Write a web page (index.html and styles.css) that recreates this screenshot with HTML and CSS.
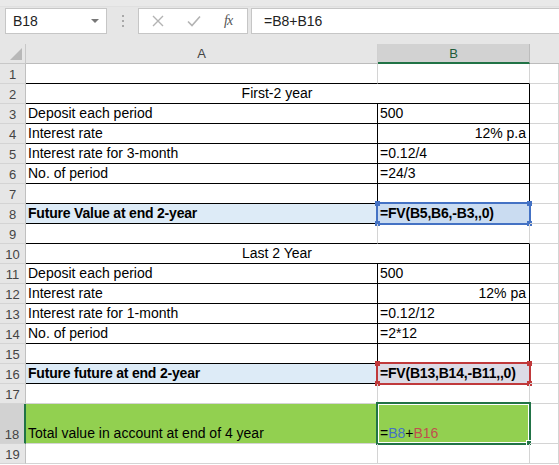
FILE: index.html
```html
<!DOCTYPE html>
<html lang="en">
<head>
	<meta charset="UTF-8">
	<title>Future value sheet</title>
	<link rel="stylesheet" href="styles.css">
</head>
<body>
	<!-- 编辑栏 -->
	<div class="fbar">
		<div class="namebox"><span>B18</span><i class="caret"></i></div>
		<div class="grip"><i></i><i></i><i></i></div>
		<div class="btns">
			<svg width="12" height="12" viewBox="0 0 12 12"><path d="M1 1L11 11M11 1L1 11" stroke="#b3b3b3" stroke-width="1.4" fill="none"/></svg>
			<svg width="14" height="12" viewBox="0 0 14 12"><path d="M1 6.5L5 10.5L13 1.5" stroke="#b3b3b3" stroke-width="1.6" fill="none"/></svg>
			<span class="fx">fx</span>
		</div>
		<div class="finput">=B8+B16</div>
	</div>
	<!-- 表格 -->
	<div class="sheet">
		<div class="corner"><i></i></div>
		<div class="colh">A</div>
		<div class="colh on">B</div>
		<div class="colh last"></div>

		<div class="rh">1</div>
		<div class="c kb"></div>
		<div class="c kb"></div>
		<div class="c"></div>

		<div class="rh">2</div>
		<div class="c span kb kr center">First-2 year</div>
		<div class="c"></div>

		<div class="rh">3</div>
		<div class="c kb kr">Deposit each period</div>
		<div class="c kb kr">500</div>
		<div class="c"></div>

		<div class="rh">4</div>
		<div class="c kb kr">Interest rate</div>
		<div class="c kb kr right">12% p.a</div>
		<div class="c"></div>

		<div class="rh">5</div>
		<div class="c kb kr">Interest rate for 3-month</div>
		<div class="c kb kr">=0.12/4</div>
		<div class="c"></div>

		<div class="rh">6</div>
		<div class="c kb kr">No. of period</div>
		<div class="c kb kr">=24/3</div>
		<div class="c"></div>

		<div class="rh">7</div>
		<div class="c kb kr"></div>
		<div class="c kb kr"></div>
		<div class="c"></div>

		<div class="rh">8</div>
		<div class="c kb kr blue bold">Future Value at end 2-year</div>
		<div class="c kb kr ref-blue bold">=FV(B5,B6,-B3,,0)<span class="sel sel-blue"><i class="tl"></i><i class="tr"></i><i class="bl"></i><i class="br"></i></span></div>
		<div class="c"></div>

		<div class="rh">9</div>
		<div class="c kb"></div>
		<div class="c kb"></div>
		<div class="c"></div>

		<div class="rh">10</div>
		<div class="c span kb kr center">Last 2 Year</div>
		<div class="c"></div>

		<div class="rh">11</div>
		<div class="c kb kr">Deposit each period</div>
		<div class="c kb kr">500</div>
		<div class="c"></div>

		<div class="rh">12</div>
		<div class="c kb kr">Interest rate</div>
		<div class="c kb kr right">12% pa</div>
		<div class="c"></div>

		<div class="rh">13</div>
		<div class="c kb kr">Interest rate for 1-month</div>
		<div class="c kb kr">=0.12/12</div>
		<div class="c"></div>

		<div class="rh">14</div>
		<div class="c kb kr">No. of period</div>
		<div class="c kb kr">=2*12</div>
		<div class="c"></div>

		<div class="rh">15</div>
		<div class="c kb kr"></div>
		<div class="c kb kr"></div>
		<div class="c"></div>

		<div class="rh">16</div>
		<div class="c kb blue bold">Future future at end 2-year</div>
		<div class="c kb kr ref-red bold">=FV(B13,B14,-B11,,0)<span class="sel sel-red"><i class="tl"></i><i class="tr"></i><i class="bl"></i><i class="br"></i></span></div>
		<div class="c"></div>

		<div class="rh">17</div>
		<div class="c"></div>
		<div class="c"></div>
		<div class="c"></div>

		<div class="rh tall on">18</div>
		<div class="c green">Total value in account at end of 4 year</div>
		<div class="c green">=<span class="t-blue">B8</span>+<span class="t-red">B16</span><span class="cur"><i class="handle"></i></span></div>
		<div class="c"></div>

		<div class="rh">19</div>
		<div class="c"></div>
		<div class="c"></div>
		<div class="c"></div>
	</div>
</body>
</html>
```

FILE: styles.css
```css
*{
	margin: 0;
	padding: 0;
	box-sizing: border-box;
}
body{
	width: 559px;
	height: 465px;
	overflow: hidden;
	background: #fff;
	font: normal 14px "Liberation Sans", Arial, sans-serif;
	color: #000;
}
/*编辑栏*/
.fbar{
	height: 44px;
	display: flex;
	align-items: flex-start;
	padding: 8px 0 0 5px;
	background: linear-gradient(#e9e9e9 0, #e9e9e9 6px, #dadada 6px, #e6e6e6 7px);
	border-bottom: 1px solid #e6e6e6;
}
.namebox{
	width: 102px;
	height: 26px;
	background: #fff;
	border: 1px solid #c6c6c6;
	display: flex;
	align-items: center;
	justify-content: space-between;
	padding: 0 7px 0 7px;
	font-size: 14px;
	color: #222;
}
.caret{
	width: 0;
	height: 0;
	border-left: 4px solid transparent;
	border-right: 4px solid transparent;
	border-top: 4px solid #777;
}
.grip{
	width: 31px;
	height: 26px;
	display: flex;
	flex-direction: column;
	align-items: center;
	justify-content: center;
	gap: 3px;
}
.grip i{
	width: 2px;
	height: 2px;
	background: #a8a8a8;
}
.btns{
	width: 110px;
	height: 26px;
	background: #fff;
	border: 1px solid #c6c6c6;
	display: flex;
	align-items: center;
	padding-left: 13px;
	gap: 23px;
}
.fx{
	font: italic 14px "Liberation Serif", serif;
	color: #555;
	letter-spacing: -1px;
}
.finput{
	flex: 1;
	height: 26px;
	margin-left: 3px;
	background: #fff;
	border: 1px solid #c6c6c6;
	border-right: none;
	padding: 0 12px;
	line-height: 24px;
	font-size: 14px;
	color: #222;
}
/*表格*/
.sheet{
	display: grid;
	grid-template-columns: 26px 352px 152px 1fr;
	grid-template-rows: 20px repeat(17, 20px) 40px 20px;
}
.corner{
	background: #e6e6e6;
	border-right: 1px solid #c8c8c8;
	border-bottom: 1px solid #c8c8c8;
	position: relative;
}
.corner i{
	position: absolute;
	right: 3px;
	bottom: 3px;
	width: 0;
	height: 0;
	border-left: 12px solid transparent;
	border-bottom: 12px solid #b8b8b8;
}
.colh{
	background: #e6e6e6;
	border-right: 1px solid #d0d0d0;
	border-bottom: 1px solid #bcbcbc;
	text-align: center;
	line-height: 19px;
	color: #444;
	font-size: 13px;
}
.colh.on{
	background: #d2d2d2;
	color: #1e5c3a;
	border-bottom: 2px solid #217346;
	border-right-color: #bcbcbc;
}
.colh.last{
	border-right: none;
}
.rh{
	background: #e6e6e6;
	border-right: 1px solid #c0c0c0;
	border-bottom: 1px solid #d4d4d4;
	display: flex;
	align-items: flex-end;
	justify-content: center;
	padding-bottom: 1px;
	color: #444;
	font-size: 13px;
}
.rh.on{
	background: #d2d2d2;
	border-right: 2px solid #217346;
}
.c{
	border-right: 1px solid #d4d4d4;
	border-bottom: 1px solid #d4d4d4;
	display: flex;
	align-items: flex-end;
	padding: 0 3px 1px 2px;
	line-height: 17px;
	white-space: nowrap;
	position: relative;
}
.span{
	grid-column: span 2;
}
.center{
	justify-content: center;
}
.right{
	justify-content: flex-end;
}
.kb{
	border-bottom-color: #000;
}
.kr{
	border-right-color: #000;
}
.bold{
	font-weight: bold;
	letter-spacing: -0.2px;
}
.blue{
	background: #ddebf7;
}
.green{
	background: #92d050;
}
.ref-blue{
	background: #cadcf1;
}
.ref-red{
	background: #dcdbe6;
}
/*引用框*/
.sel{
	position: absolute;
	top: -2px;
	left: -2px;
	right: -2px;
	bottom: -2px;
	border: 2px solid #4472c4;
}
.sel-red{
	border-color: #c0393b;
}
.sel i{
	position: absolute;
	width: 5px;
	height: 5px;
	background: #4472c4;
}
.sel-red i{
	background: #c0393b;
}
.sel .tl{ top: -3px; left: -3px; }
.sel .tr{ top: -3px; right: -3px; }
.sel .bl{ bottom: -3px; left: -3px; }
.sel .br{ bottom: -3px; right: -3px; }
/*当前单元格*/
.cur{
	position: absolute;
	top: -2px;
	left: -2px;
	right: -2px;
	bottom: -2px;
	border: 2px solid #217346;
	box-shadow: inset 0 0 0 1px #fff;
}
.handle{
	position: absolute;
	right: -3px;
	bottom: -3px;
	width: 6px;
	height: 6px;
	background: #217346;
	border: 1px solid #fff;
}
.t-blue{
	color: #4472c4;
}
.t-red{
	color: #c0504d;
}
```
